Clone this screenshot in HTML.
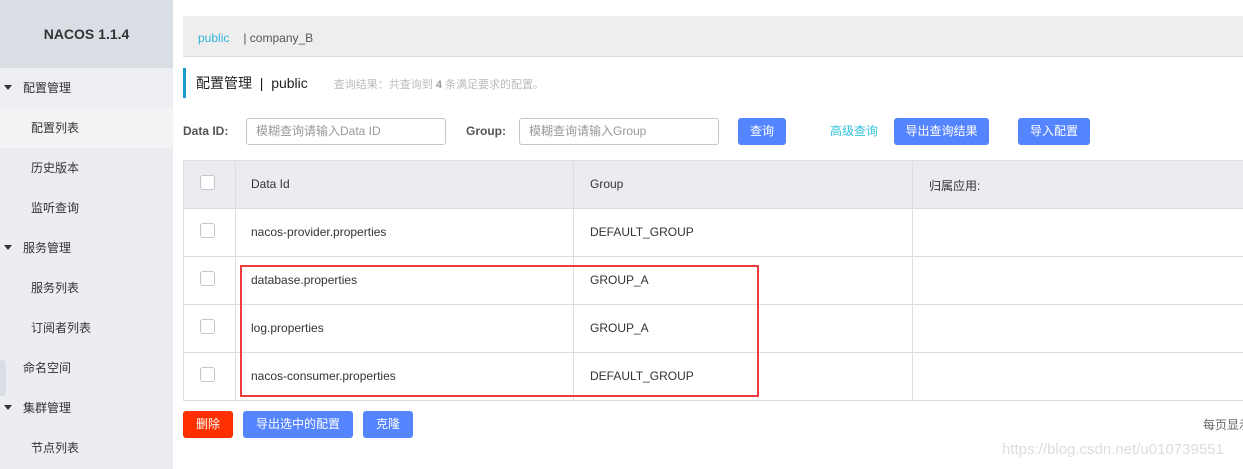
<!DOCTYPE html>
<html><head><meta charset="utf-8"><style>
*{margin:0;padding:0;box-sizing:border-box}
body{width:1243px;height:469px;overflow:hidden;background:#fff;font-family:"Liberation Sans","Noto Sans CJK SC",sans-serif;font-size:12px;color:#333;position:relative}
.a{position:absolute}
.side{left:0;top:0;width:173px;height:469px;background:#ebedf1}
.logo{left:0;top:0;width:173px;height:68px;background:#d9dde4;font-weight:bold;font-size:14px;color:#333;text-align:center;line-height:68px}
.mi{left:0;width:173px;height:40px;line-height:40px;font-size:12px;color:#333}
.tri{display:inline-block;width:0;height:0;border-left:4px solid transparent;border-right:4px solid transparent;border-top:5px solid #333;margin:0 11px 2px 4px;vertical-align:middle}
.btn{height:27px;line-height:27px;color:#fff;background:#5584ff;border-radius:3px;text-align:center;font-size:12px}
.inp{height:27px;border:1px solid #c4c6cf;border-radius:3px;line-height:25px;padding-left:9px;color:#999}
.cb{width:15px;height:15px;border:1px solid #c4c6cf;border-radius:3px;background:#fff}
.hl{height:1px;background:#dcdee3}
.vl{width:1px;background:#dcdee3}
</style></head><body>
<div class="a side"></div>
<div class="a logo">NACOS 1.1.4</div>
<div class="a mi" style="top:68px;background:#eceef1"><span class="tri"></span>配置管理</div>
<div class="a mi" style="top:108px;background:#f2f3f5;padding-left:31px">配置列表</div>
<div class="a mi" style="top:148px;padding-left:31px">历史版本</div>
<div class="a mi" style="top:188px;padding-left:31px">监听查询</div>
<div class="a mi" style="top:228px"><span class="tri"></span>服务管理</div>
<div class="a mi" style="top:268px;padding-left:31px">服务列表</div>
<div class="a mi" style="top:308px;padding-left:31px">订阅者列表</div>
<div class="a mi" style="top:348px;padding-left:23px">命名空间</div>
<div class="a" style="left:0;top:360px;width:6px;height:36px;background:#d9dde4;border-radius:0 4px 4px 0"></div>
<div class="a mi" style="top:388px"><span class="tri"></span>集群管理</div>
<div class="a mi" style="top:428px;padding-left:31px">节点列表</div>

<div class="a" style="left:183px;top:16px;width:1060px;height:41px;background:#eeeeee;border-bottom:1px solid #ddd;line-height:44px;padding-left:15px"><span style="color:#33b4dd">public</span><span style="margin-left:14px;color:#555">| company_B</span></div>
<div class="a" style="left:183px;top:68px;width:3px;height:30px;background:#1a9bd0"></div>
<div class="a" style="left:196px;top:68px;height:30px;line-height:30px;font-size:14px;color:#222">配置管理 &nbsp;|&nbsp; public<span style="font-size:11px;color:#bbb;margin-left:26px">查询结果：共查询到 <b style="color:#999">4</b> 条满足要求的配置。</span></div>

<div class="a" style="left:183px;top:118px;line-height:27px;font-weight:bold;color:#555">Data ID:</div>
<div class="a inp" style="left:246px;top:118px;width:200px">模糊查询请输入Data ID</div>
<div class="a" style="left:466px;top:118px;line-height:27px;font-weight:bold;color:#555">Group:</div>
<div class="a inp" style="left:519px;top:118px;width:200px">模糊查询请输入Group</div>
<div class="a btn" style="left:738px;top:118px;width:48px">查询</div>
<div class="a" style="left:830px;top:118px;line-height:27px;color:#33c3dd">高级查询</div>
<div class="a btn" style="left:894px;top:118px;width:95px">导出查询结果</div>
<div class="a btn" style="left:1018px;top:118px;width:72px">导入配置</div>

<div class="a" style="left:183px;top:160px;width:1060px;height:48px;background:#ebecf0"></div>
<div class="a hl" style="left:183px;top:160px;width:1060px"></div>
<div class="a hl" style="left:183px;top:208px;width:1060px"></div>
<div class="a hl" style="left:183px;top:256px;width:1060px"></div>
<div class="a hl" style="left:183px;top:304px;width:1060px"></div>
<div class="a hl" style="left:183px;top:352px;width:1060px"></div>
<div class="a hl" style="left:183px;top:400px;width:1060px"></div>
<div class="a vl" style="left:183px;top:160px;height:241px"></div>
<div class="a vl" style="left:235px;top:160px;height:241px"></div>
<div class="a vl" style="left:573px;top:160px;height:241px"></div>
<div class="a vl" style="left:912px;top:160px;height:241px"></div>
<div class="a cb" style="left:200px;top:175px"></div>
<div class="a cb" style="left:200px;top:223px"></div>
<div class="a cb" style="left:200px;top:271px"></div>
<div class="a cb" style="left:200px;top:319px"></div>
<div class="a cb" style="left:200px;top:367px"></div>
<div class="a" style="left:251px;top:177px">Data Id</div>
<div class="a" style="left:590px;top:177px">Group</div>
<div class="a" style="left:929px;top:177px">归属应用:</div>
<div class="a" style="left:251px;top:225px">nacos-provider.properties</div>
<div class="a" style="left:590px;top:225px">DEFAULT_GROUP</div>
<div class="a" style="left:251px;top:273px">database.properties</div>
<div class="a" style="left:590px;top:273px">GROUP_A</div>
<div class="a" style="left:251px;top:321px">log.properties</div>
<div class="a" style="left:590px;top:321px">GROUP_A</div>
<div class="a" style="left:251px;top:369px">nacos-consumer.properties</div>
<div class="a" style="left:590px;top:369px">DEFAULT_GROUP</div>
<div class="a" style="left:240px;top:265px;width:519px;height:132px;border:2px solid #ee3b3b"></div>

<div class="a btn" style="left:183px;top:411px;width:50px;background:#ff3000">删除</div>
<div class="a btn" style="left:243px;top:411px;width:110px">导出选中的配置</div>
<div class="a btn" style="left:363px;top:411px;width:50px">克隆</div>
<div class="a" style="left:1203px;top:416px;color:#666;white-space:nowrap">每页显示</div>
<div class="a" style="left:1002px;top:441px;font-size:15px;color:#ddd;white-space:nowrap">https://blog.csdn.net/u010739551</div>
</body></html>
